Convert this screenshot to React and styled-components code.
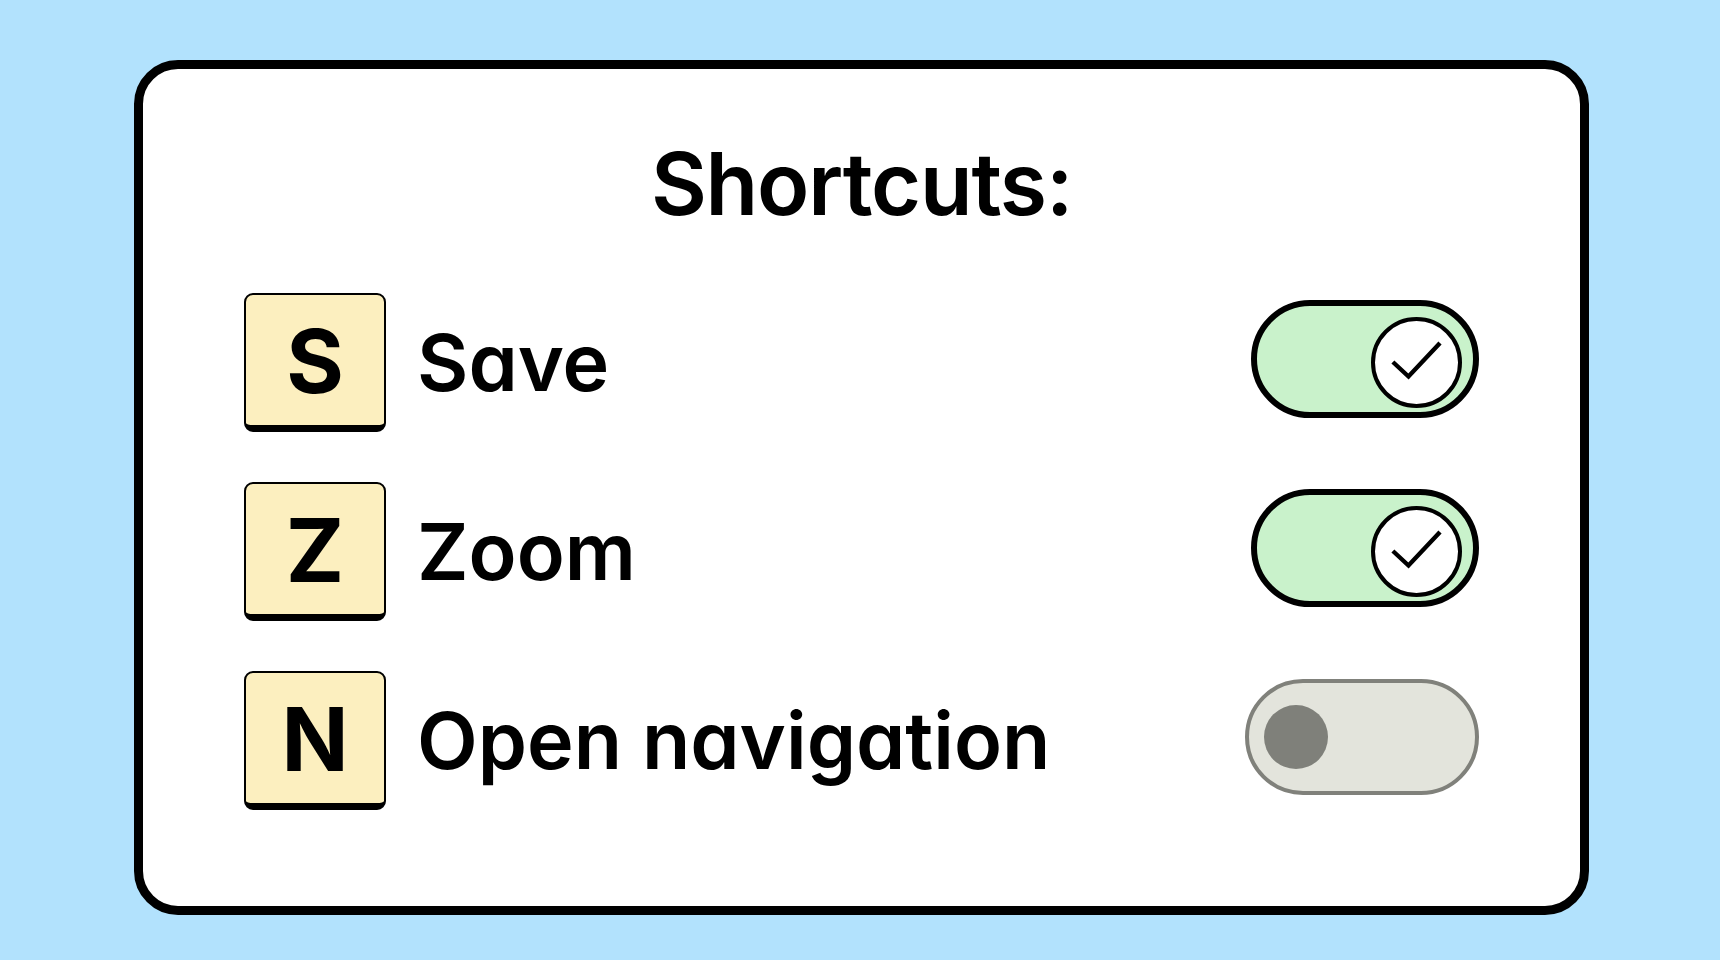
import React from "react";
import styled, { createGlobalStyle } from "styled-components";

const GlobalStyle = createGlobalStyle`
  html, body {
    margin: 0;
    padding: 0;
    background: #b2e2fd;
  }
  body {
    font-family: Inter, "Noto Sans", sans-serif;
    color: #000;
  }
`;

const Page = styled.main`
  box-sizing: border-box;
  width: 1720px;
  height: 960px;
  padding: 60px 131px 45px 134px;
`;

const Card = styled.section`
  box-sizing: border-box;
  height: 100%;
  background: #fff;
  border: 9px solid #000;
  border-radius: 44px;
  padding: 65px 101px 0 101px;
  display: flex;
  flex-direction: column;
`;

const Title = styled.h1`
  margin: 0;
  font-family: Inter, "Liberation Sans", sans-serif;
  font-weight: 600;
  font-size: 86px;
  line-height: 101px;
  letter-spacing: -1.2px;
  text-align: center;
`;

const List = styled.ul`
  list-style: none;
  margin: 58px 0 0;
  padding: 0;
  display: flex;
  flex-direction: column;
  gap: 50px;
`;

const Row = styled.li`
  display: flex;
  align-items: center;
  height: 139px;
`;

const Key = styled.kbd`
  box-sizing: border-box;
  flex: none;
  width: 142px;
  height: 139px;
  display: flex;
  align-items: center;
  justify-content: center;
  padding-top: 2px;
  background: #fcefbf;
  border: 2px solid #000;
  border-bottom-width: 7px;
  border-radius: 9px;
  font-family: Inter, "Liberation Sans", sans-serif;
  font-weight: 700;
  font-size: 88px;
  line-height: 1;
`;

const Label = styled.span`
  margin-left: 31px;
  font-family: Inter, "Noto Sans", sans-serif;
  font-feature-settings: "cv11" 1;
  font-weight: 600;
  font-size: 79px;
  line-height: 1;
`;

const Track = styled.div`
  box-sizing: border-box;
  margin-left: auto;
  margin-bottom: 7px;
  flex: none;
  display: flex;
  border-radius: 999px;
  ${({ $on }) =>
    $on
      ? `
    width: 228px;
    height: 118px;
    border: 6px solid #000;
    background: #c9f2cb;
    justify-content: flex-end;
    align-items: flex-start;
    padding: 11px 11px 0 0;
  `
      : `
    width: 234px;
    height: 116px;
    border: 4px solid #80817b;
    background: #e3e4dc;
    justify-content: flex-start;
    align-items: center;
    padding-left: 15px;
  `}
`;

const Knob = styled.span`
  box-sizing: border-box;
  flex: none;
  border-radius: 50%;
  display: flex;
  align-items: center;
  justify-content: center;
  ${({ $on }) =>
    $on
      ? `
    width: 91px;
    height: 91px;
    border: 4px solid #000;
    background: #fff;
  `
      : `
    width: 64px;
    height: 64px;
    background: #7f807a;
  `}
`;

const Check = () => (
  <svg width="83" height="83" viewBox="0 0 83 83" fill="none">
    <path
      d="M19.5 42.5 L33.5 55.5 L63.5 23.5"
      stroke="#000"
      strokeWidth="4.4"
      strokeLinecap="square"
      strokeLinejoin="miter"
    />
  </svg>
);

const Toggle = ({ on }) => (
  <Track $on={on} role="switch" aria-checked={on}>
    <Knob $on={on}>{on && <Check />}</Knob>
  </Track>
);

const shortcuts = [
  { key: "S", label: "Save", on: true },
  { key: "Z", label: "Zoom", on: true },
  { key: "N", label: "Open navigation", on: false },
];

export default function App() {
  return (
    <>
      <GlobalStyle />
      <Page>
        <Card>
          <Title>Shortcuts:</Title>
          <List>
            {shortcuts.map((s) => (
              <Row key={s.key}>
                <Key>{s.key}</Key>
                <Label>{s.label}</Label>
                <Toggle on={s.on} />
              </Row>
            ))}
          </List>
        </Card>
      </Page>
    </>
  );
}
